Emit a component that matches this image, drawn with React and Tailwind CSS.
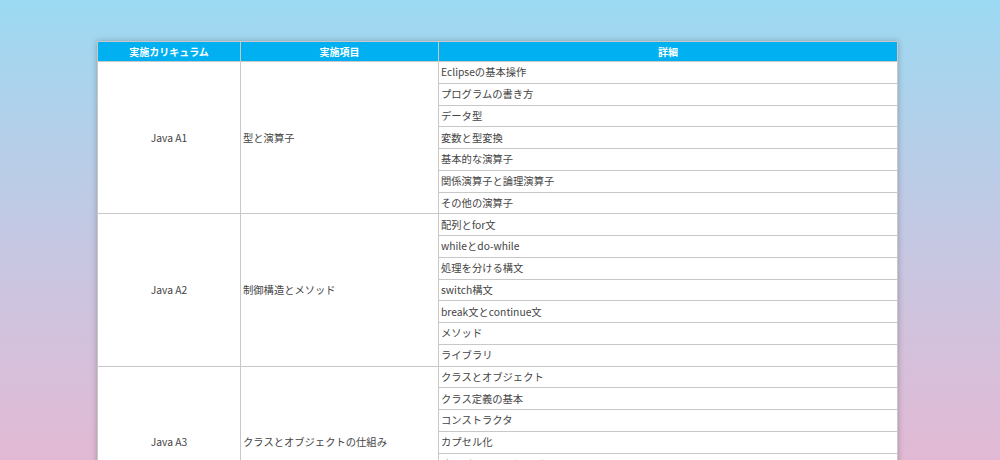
import React from 'react'

const COURSES = [
  {
    name: 'Java A1',
    item: '型と演算子',
    details: ['Eclipseの基本操作', 'プログラムの書き方', 'データ型', '変数と型変換', '基本的な演算子', '関係演算子と論理演算子', 'その他の演算子'],
  },
  {
    name: 'Java A2',
    item: '制御構造とメソッド',
    details: ['配列とfor文', 'whileとdo-while', '処理を分ける構文', 'switch構文', 'break文とcontinue文', 'メソッド', 'ライブラリ'],
  },
  {
    name: 'Java A3',
    item: 'クラスとオブジェクトの仕組み',
    details: ['クラスとオブジェクト', 'クラス定義の基本', 'コンストラクタ', 'カプセル化', 'オーバーロードとstatic', 'パッケージ', '参照型の扱い'],
  },
]

const App = () => {
  return (
    <div
      className="w-[1000px] h-[460px] overflow-hidden bg-gradient-to-b from-[#9bd9f2] via-[#c3c8e3] to-[#e2b9d4] pt-[41px]"
      style={{ fontFamily: '"Noto Sans CJK JP", "Noto Sans", sans-serif' }}
    >
      <table className="ml-[97px] w-[801px] border-collapse table-fixed bg-white text-[10.3px] text-[#444] shadow-[0_0_6px_rgba(0,0,0,0.25)]">
        <colgroup>
          <col className="w-[143px]" />
          <col className="w-[198px]" />
          <col />
        </colgroup>
        <thead>
          <tr className="h-[20px] bg-[#00b0f0] text-white">
            <th className="border border-[#c8c8c8] font-bold text-[10px] leading-[18px]">実施カリキュラム</th>
            <th className="border border-[#c8c8c8] font-bold text-[10px] leading-[18px]">実施項目</th>
            <th className="border border-[#c8c8c8] font-bold text-[10px] leading-[18px]">詳細</th>
          </tr>
        </thead>
        <tbody>
          {COURSES.map(course =>
            course.details.map((detail, i) => (
              <tr key={course.name + i} className="h-[21.75px]">
                {i === 0 && (
                  <>
                    <td rowSpan={course.details.length} className="border border-[#c8c8c8] text-center">
                      {course.name}
                    </td>
                    <td rowSpan={course.details.length} className="border border-[#c8c8c8] pl-[2px]">
                      {course.item}
                    </td>
                  </>
                )}
                <td className="border border-[#c8c8c8] pl-[2px] leading-[20px] whitespace-nowrap">{detail}</td>
              </tr>
            ))
          )}
        </tbody>
      </table>
    </div>
  )
}

export default App
